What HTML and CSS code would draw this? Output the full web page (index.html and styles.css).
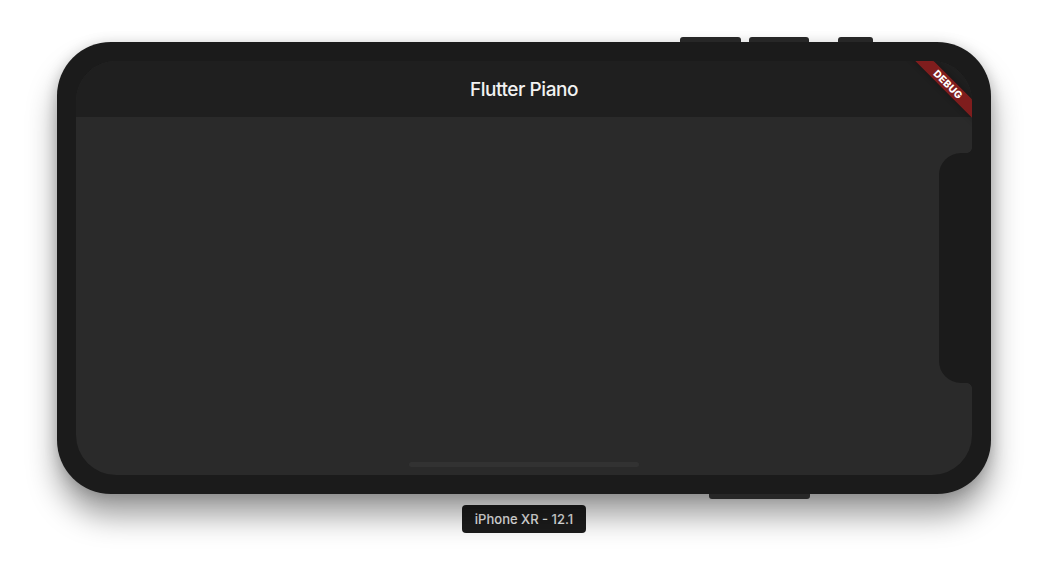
FILE: index.html
```html
<!DOCTYPE html>
<html lang="en">
<head>
<meta charset="utf-8">
<title>Flutter Piano</title>
<link rel="stylesheet" href="styles.css">
</head>
<body>
  <main class="stage">
    <div class="phone">
      <span class="hw-btn hw-top hw-top-1"></span>
      <span class="hw-btn hw-top hw-top-2"></span>
      <span class="hw-btn hw-top hw-top-3"></span>
      <span class="hw-btn hw-bottom"></span>
      <div class="screen">
        <header class="app-bar">
          <h1 class="app-title">Flutter Piano</h1>
        </header>
        <section class="app-body">
          <div class="home-indicator"></div>
        </section>
        <div class="notch"></div>
        <div class="debug-banner">DEBUG</div>
      </div>
    </div>
    <div class="device-label">iPhone XR - 12.1</div>
  </main>
</body>
</html>
```

FILE: styles.css
```css
html, body {
  margin: 0;
  padding: 0;
  background: #ffffff;
  font-family: Inter, "Liberation Sans", sans-serif;
}

.stage {
  width: 1048px;
  height: 584px;
  display: flex;
  flex-direction: column;
  align-items: center;
  padding-top: 42px;
  box-sizing: border-box;
}

.phone {
  position: relative;
  width: 934px;
  height: 452px;
  box-sizing: border-box;
  padding: 19px;
  background: #1b1b1b;
  border-radius: 54px;
  box-shadow: 0 22px 30px rgba(0, 0, 0, 0.38), 0 2px 14px rgba(0, 0, 0, 0.18);
  display: flex;
}

.hw-btn {
  position: absolute;
  background: #272727;
}

.hw-top {
  top: -5px;
  height: 5px;
  border-radius: 3px 3px 0 0;
}

.hw-top-1 { left: 623px; width: 61px; }
.hw-top-2 { left: 692px; width: 60px; }
.hw-top-3 { left: 781px; width: 35px; }

.hw-bottom {
  bottom: -5px;
  left: 652px;
  width: 101px;
  height: 5px;
  border-radius: 0 0 3px 3px;
}

.screen {
  position: relative;
  flex: 1;
  display: flex;
  flex-direction: column;
  border-radius: 40px;
  overflow: hidden;
  background: #2a2a2a;
}

.app-bar {
  height: 56px;
  flex: none;
  background: #1f1f1f;
  display: flex;
  align-items: center;
  justify-content: center;
}

.app-title {
  margin: 0;
  color: #f2f2f2;
  font-size: 19px;
  font-weight: 500;
  letter-spacing: -0.45px;
}

.app-body {
  flex: 1;
  display: flex;
  flex-direction: column;
  justify-content: flex-end;
  align-items: center;
  padding-bottom: 8px;
}

.home-indicator {
  width: 230px;
  height: 5px;
  border-radius: 3px;
  background: #323232;
}

.notch {
  position: absolute;
  right: 0;
  top: 92px;
  width: 33px;
  height: 230px;
  background: #1b1b1b;
  border-radius: 22px 0 0 22px;
}

.notch::before,
.notch::after {
  content: "";
  position: absolute;
  right: 0;
  width: 5px;
  height: 5px;
}

.notch::before {
  top: -5px;
  background: radial-gradient(circle at 0 0, transparent 4.5px, #1b1b1b 5px);
}

.notch::after {
  bottom: -5px;
  background: radial-gradient(circle at 0 100%, transparent 4.5px, #1b1b1b 5px);
}

.debug-banner {
  position: absolute;
  left: 812px;
  top: 17px;
  width: 120px;
  height: 13px;
  transform: rotate(45deg);
  background: rgba(183, 28, 28, 0.63);
  box-shadow: 0 0 6px rgba(0, 0, 0, 0.3);
  color: #ffffff;
  font-family: Inter, "Liberation Sans", sans-serif;
  font-size: 10px;
  font-weight: 800;
  line-height: 13px;
  text-align: center;
  letter-spacing: 0.3px;
}

.device-label {
  margin-top: 11px;
  height: 28px;
  padding: 0 13px;
  box-sizing: border-box;
  display: flex;
  align-items: center;
  background: #1c1c1c;
  border-radius: 4px;
  color: #ececec;
  font-size: 13px;
  font-weight: 500;
}
```
